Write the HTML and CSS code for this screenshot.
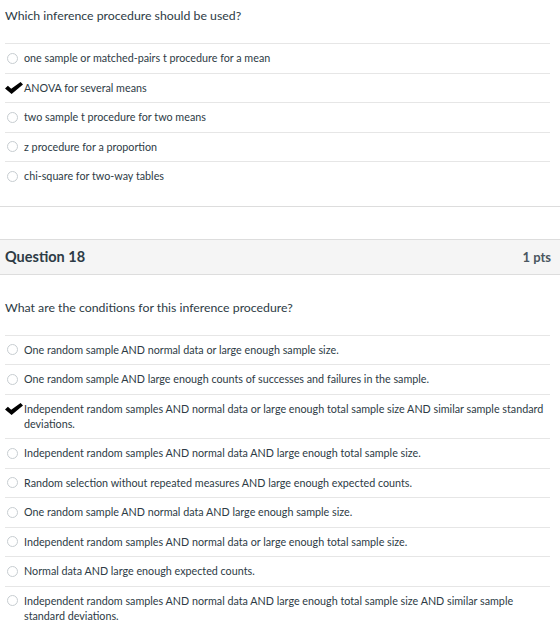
FILE: index.html
```html
<!DOCTYPE html>
<html lang="en">
<head>
  <meta charset="UTF-8"/>
  <title>Quiz</title>
  <link rel="stylesheet" href="styles.css">
</head>
<body>
<div class="question">
  <p class="question-text">Which inference procedure should be used?</p>
  <div class="answers">
    <div class="answer"><span class="radio"></span><span class="label">one sample or matched-pairs t procedure for a mean</span></div>
    <div class="answer selected"><svg class="check" viewBox="0 0 18 12"><path d="M0 6.4 L2.9 3.8 L6.2 6.8 L15.6 0 L18 2.4 L6.6 12 Z"/></svg><span class="label">ANOVA for several means</span></div>
    <div class="answer"><span class="radio"></span><span class="label">two sample t procedure for two means</span></div>
    <div class="answer"><span class="radio"></span><span class="label">z procedure for a proportion</span></div>
    <div class="answer"><span class="radio"></span><span class="label">chi-square for two-way tables</span></div>
  </div>
</div>

<div class="question">
  <div class="question-header">
    <span class="q-name">Question 18</span>
    <span class="q-points">1 pts</span>
  </div>
  <p class="question-text">What are the conditions for this inference procedure?</p>
  <div class="answers">
    <div class="answer"><span class="radio"></span><span class="label">One random sample AND normal data or large enough sample size.</span></div>
    <div class="answer"><span class="radio"></span><span class="label">One random sample AND large enough counts of successes and failures in the sample.</span></div>
    <div class="answer selected"><svg class="check" viewBox="0 0 18 12"><path d="M0 6.4 L2.9 3.8 L6.2 6.8 L15.6 0 L18 2.4 L6.6 12 Z"/></svg><span class="label">Independent random samples AND normal data or large enough total sample size AND similar sample standard deviations.</span></div>
    <div class="answer"><span class="radio"></span><span class="label">Independent random samples AND normal data AND large enough total sample size.</span></div>
    <div class="answer"><span class="radio"></span><span class="label">Random selection without repeated measures AND large enough expected counts.</span></div>
    <div class="answer"><span class="radio"></span><span class="label">One random sample AND normal data AND large enough sample size.</span></div>
    <div class="answer"><span class="radio"></span><span class="label">Independent random samples AND normal data or large enough total sample size.</span></div>
    <div class="answer"><span class="radio"></span><span class="label">Normal data AND large enough expected counts.</span></div>
    <div class="answer"><span class="radio"></span><span class="label">Independent random samples AND normal data AND large enough total sample size AND similar sample standard deviations.</span></div>
  </div>
</div>
</body>
</html>
```

FILE: styles.css
```css
body { margin:0; background:#fff; color:#2d3b45; font-family:Lato, "Open Sans", sans-serif; }
.question-text { margin:0; padding:8px 5px 0; font-size:12.3px; line-height:16px; }
.answers { margin:19px 10px 0 5px; }
.answer { display:flex; align-items:flex-start; border-top:1px solid #e6e6e6; padding:6px 0 7.5px; font-size:10.75px; line-height:15px; }
.radio { flex:none; width:11px; height:11px; margin:2.5px 6px 0 2px; border:1px solid #c7cdd1; border-radius:50%; box-sizing:border-box; }
.check { flex:none; width:18px; height:12px; margin:2px 1px 0 0; fill:#000; }
.label { flex:1; }
.question:first-child { border-bottom:1px solid #ddd; padding-bottom:15px; }
.question + .question { margin-top:32px; }
.question-header { display:flex; justify-content:space-between; align-items:center; height:34px; padding:0 9px 0 5px; background:#f5f5f5; border-top:1px solid #ddd; border-bottom:1px solid #ddd; }
.q-name { font-size:14.5px; font-weight:700; }
.q-points { font-size:13px; font-weight:700; color:#4a5660; }
.question-header + .question-text { padding-top:25px; }
```
